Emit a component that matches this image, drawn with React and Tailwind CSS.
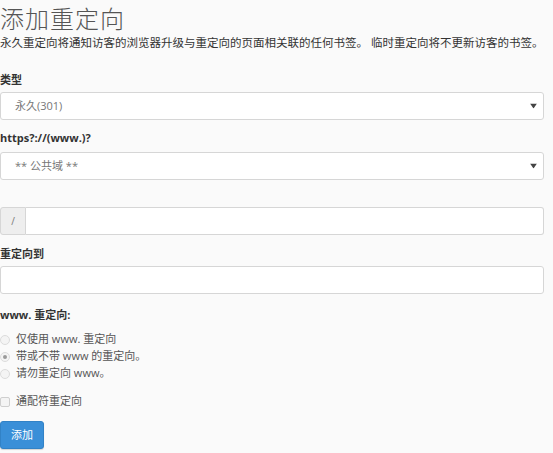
import React from 'react'

const font = { fontFamily: '"Open Sans", "Noto Sans CJK SC", sans-serif' }

const Arrow = () => (
  <svg width="7" height="5" viewBox="0 0 7 5" className="absolute right-[6px] top-1/2 -translate-y-1/2">
    <path d="M0 0 L7 0 L3.5 5 Z" fill="#444" />
  </svg>
)

const Select = ({ value }) => (
  <div className="relative h-[28px] w-full rounded-[3px] border border-[#d6d6d6] bg-white flex items-center pl-[14px] text-[11px] text-[#777]">
    {value}
    <Arrow />
  </div>
)

const Radio = ({ checked, children }) => (
  <div className="flex items-center h-[17px]">
    <span className="w-[10px] h-[10px] rounded-full border border-[#dcdcdc] bg-[#f4f4f4] flex items-center justify-center">
      {checked && <span className="w-[4px] h-[4px] rounded-full bg-[#9a9a9a]" />}
    </span>
    <span className="ml-[6px] text-[11px] text-[#555]">{children}</span>
  </div>
)

export default function App() {
  return (
    <div className="w-[553px] h-[453px] bg-[#fafafa] overflow-hidden" style={font}>
      <div className="w-[544px] flex flex-col">
        <h1 className="text-[24px] leading-[36px] font-light text-[#555] tracking-[1px]" style={{ fontFamily: '"Noto Sans CJK SC", serif' }}>添加重定向</h1>
        <p className="text-[11.5px] leading-[14px] text-[#333] whitespace-nowrap">永久重定向将通知访客的浏览器升级与重定向的页面相关联的任何书签。 临时重定向将不更新访客的书签。</p>

        <label className="mt-[23px] text-[11px] leading-[14px] font-bold text-[#333]">类型</label>
        <div className="mt-[5px]"><Select value="永久(301)" /></div>

        <label className="mt-[11px] text-[11px] leading-[14px] font-bold text-[#333]">https?://(www.)?</label>
        <div className="mt-[7px]"><Select value="** 公共域 **" /></div>

        <div className="mt-[27px] flex h-[28px] w-full">
          <div className="w-[26px] h-full bg-[#eeeeee] border border-[#d6d6d6] rounded-l-[3px] flex items-center justify-center text-[10px] text-[#777]">/</div>
          <div className="flex-1 h-full bg-white border border-l-0 border-[#d6d6d6] rounded-r-[3px]" />
        </div>

        <label className="mt-[12px] text-[11px] leading-[14px] font-bold text-[#333]">重定向到</label>
        <div className="mt-[5px] h-[28px] w-full bg-white border border-[#d6d6d6] rounded-[3px]" />

        <label className="mt-[14px] text-[11px] leading-[14px] font-bold text-[#333]">www. 重定向:</label>
        <div className="mt-[9px] flex flex-col">
          <Radio>仅使用 www. 重定向</Radio>
          <Radio checked>带或不带 www 的重定向。</Radio>
          <Radio>请勿重定向 www。</Radio>
        </div>

        <div className="mt-[11px] flex items-center h-[17px]">
          <span className="w-[10px] h-[10px] rounded-[2px] border border-[#cfcfcf] bg-[#f4f4f4]" />
          <span className="ml-[6px] text-[11px] text-[#555]">通配符重定向</span>
        </div>

        <button className="mt-[11px] w-[44px] h-[28px] rounded-[3px] bg-[#3a8fd8] text-white text-[11px] border border-[#3282c6] shadow-[0_1px_1px_rgba(0,0,0,0.15)]">添加</button>
      </div>
    </div>
  )
}
